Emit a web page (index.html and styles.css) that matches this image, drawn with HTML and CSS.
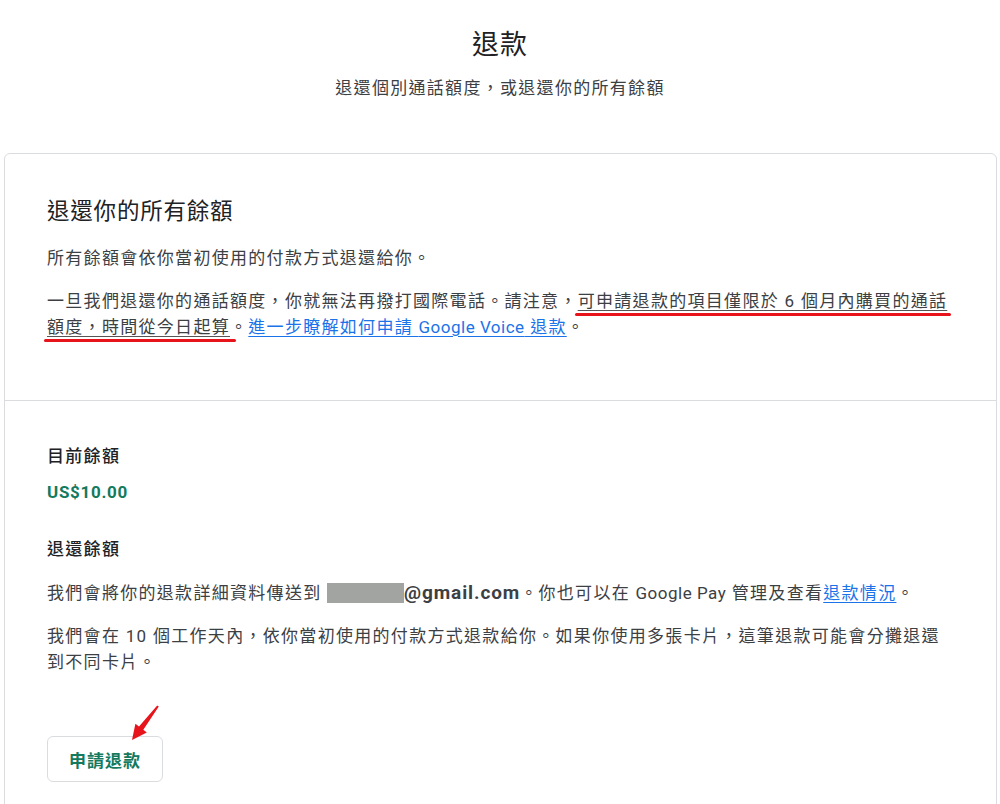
FILE: index.html
```html
<!DOCTYPE html>
<html lang="zh-Hant">
<head>
<meta charset="utf-8">
<title>退款</title>
<link rel="stylesheet" href="styles.css">
</head>
<body>
<header class="page-head">
  <h1 class="page-title">退款</h1>
  <p class="page-sub">退還個別通話額度，或退還你的所有餘額</p>
</header>
<main class="card">
  <section class="card-sec sec-top">
    <h2 class="sec-title">退還你的所有餘額</h2>
    <p class="txt p-first">所有餘額會依你當初使用的付款方式退還給你。</p>
    <p class="txt p-next">一旦我們退還你的通話額度，你就無法再撥打國際電話。請注意，<span class="mark m1">可申請退款的項目僅限於 6 個月內購買的通話</span><br><span class="mark m2">額度，時間從今日起算</span>。<a class="link" href="#">進一步瞭解如何申請 <span class="latin">Google Voice</span> 退款</a>。</p>
  </section>
  <section class="card-sec sec-bottom">
    <h3 class="label">目前餘額</h3>
    <div class="amount">US$10.00</div>
    <h3 class="label label-2">退還餘額</h3>
    <p class="txt p-first">我們會將你的退款詳細資料傳送到 <span class="redact"></span><b class="email">@gmail.com</b>。你也可以在 <span class="latin">Google Pay</span> 管理及查看<a class="link" href="#">退款情況</a>。</p>
    <p class="txt p-next">我們會在 10 個工作天內，依你當初使用的付款方式退款給你。如果你使用多張卡片，這筆退款可能會分攤退還<br>到不同卡片。</p>
    <div class="btn-wrap">
      <button class="btn" type="button">申請退款</button>
      <svg class="arrow" width="36" height="38" viewBox="0 0 36 38"><polygon points="32.8,2.5 17.3,25.8 20.8,28.6 6,36 9.4,19.7 13,22.6 31.2,1.5" fill="#e8141c"/></svg>
    </div>
  </section>
</main>
</body>
</html>
```

FILE: styles.css
```css
* { box-sizing: border-box; }
html, body { margin: 0; padding: 0; background: #fff; }
body {
  font-family: Roboto, "Noto Sans CJK TC", "Noto Sans CJK SC", sans-serif;
  color: #3c4043;
  overflow: hidden;
  height: 804px;
}
.page-head { text-align: center; padding-top: 27px; }
.page-title {
  margin: 0;
  font-size: 27px;
  line-height: 36px;
  font-weight: 400;
  color: #202124;
  letter-spacing: 1px;
}
.page-sub {
  margin: 12px 0 0;
  font-size: 17px;
  line-height: 26px;
  letter-spacing: 1.3px;
  color: #3c4043;
}
.card {
  margin: 52px 3px 0 4px;
  border: 1px solid #dadce0;
  border-radius: 6px;
  height: 800px;
}
.card-sec { padding: 0 40px 0 42px; }
.sec-top { padding-top: 41px; padding-bottom: 60px; border-bottom: 1px solid #dadce0; }
.sec-title {
  margin: 0;
  font-size: 22.5px;
  line-height: 32px;
  font-weight: 400;
  color: #202124;
  letter-spacing: 0.8px;
}
.txt {
  margin: 0;
  font-size: 17px;
  line-height: 26px;
  letter-spacing: 1.3px;
  color: #3c4043;
}
.sec-top .p-first { margin-top: 18px; }
.p-next { margin-top: 17px; }
.mark {
  position: relative;
  text-decoration: underline;
  text-decoration-color: #555;
  text-decoration-thickness: 1px;
  text-underline-offset: 3px;
}
.mark::after {
  content: "";
  position: absolute;
  left: -3px;
  right: -4px;
  bottom: -5px;
  height: 3px;
  border-radius: 2px;
  background: #e8141c;
}
.m2::after { right: -6px; }
.link { color: #1a73e8; text-decoration: underline; text-underline-offset: 3px; }
.latin { letter-spacing: 0.5px; }
.sec-bottom { padding-top: 42px; }
.label {
  margin: 0;
  font-size: 17px;
  line-height: 26px;
  font-weight: 500;
  color: #202124;
  letter-spacing: 1.3px;
}
.amount {
  margin-top: 10px;
  font-size: 17px;
  line-height: 26px;
  font-weight: 700;
  color: #137a5e;
  letter-spacing: 0.7px;
}
.label-2 { margin-top: 31px; }
.sec-bottom .p-first { margin-top: 18px; }
.redact {
  display: inline-block;
  width: 77px;
  height: 20px;
  background: #a2a4a2;
  vertical-align: -4px;
}
.email { font-size: 19px; font-weight: 700; color: #3c4043; letter-spacing: 0.9px; }
.btn-wrap { position: relative; margin-top: 61px; width: 116px; }
.btn {
  display: block;
  width: 116px;
  height: 46px;
  background: #fff;
  border: 1px solid #dadce0;
  border-radius: 6px;
  font-family: "Noto Sans CJK TC", sans-serif;
  font-size: 17px;
  font-weight: 700;
  color: #137a5e;
  letter-spacing: 1px;
  padding: 0;
}
.arrow { position: absolute; left: 79px; top: -32px; }
```
